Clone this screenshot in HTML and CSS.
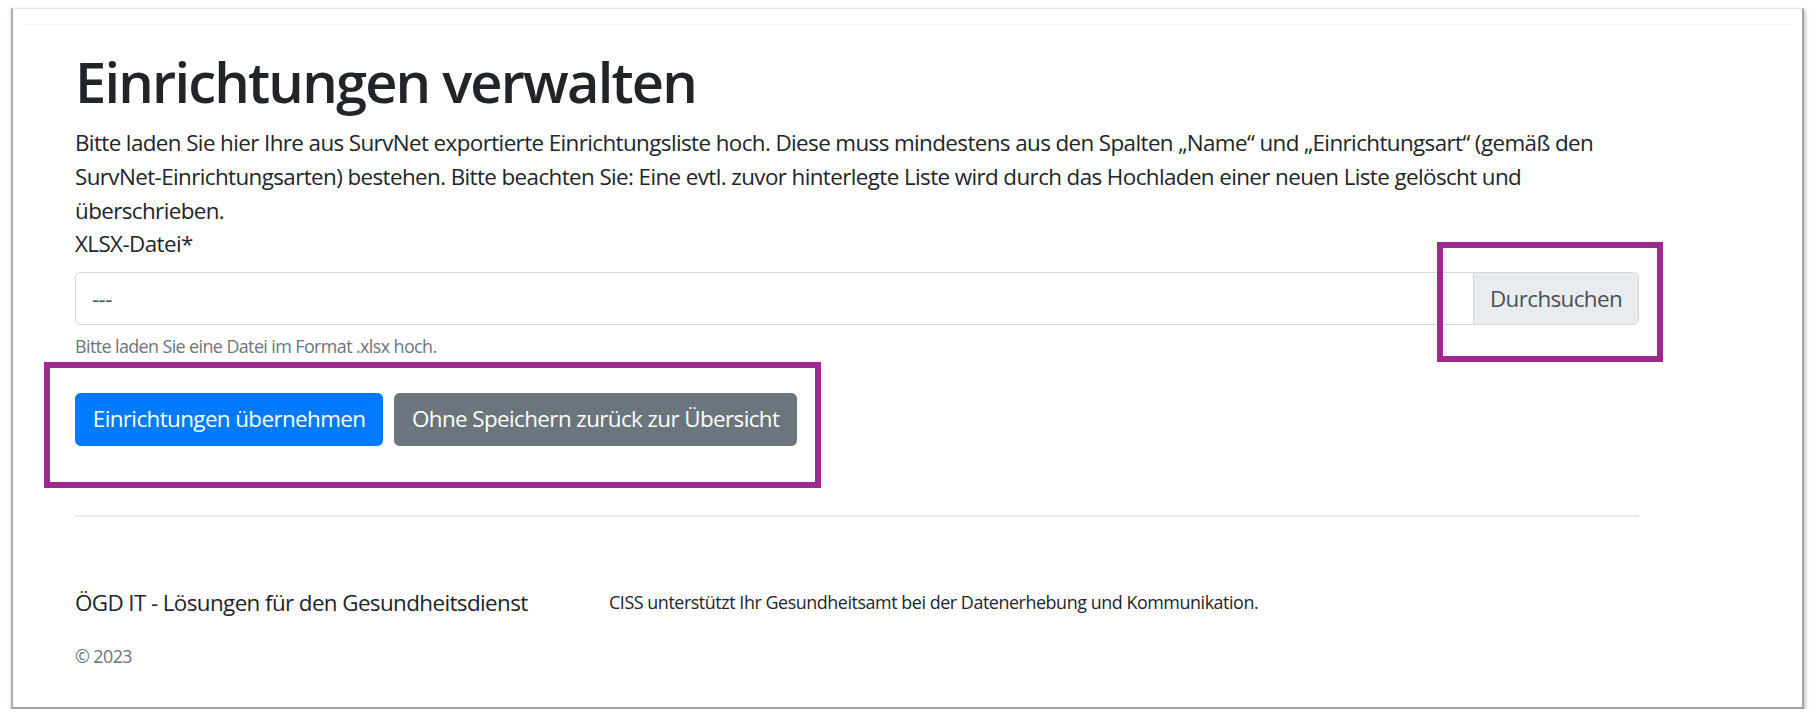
FILE: index.html
```html
<!DOCTYPE html>
<html lang="de">
<head>
<meta charset="utf-8">
<title>Einrichtungen verwalten</title>
<link rel="stylesheet" href="styles.css">
</head>
<body>
<div class="frame">
  <div class="navbar"></div>
  <main class="content">
    <h1 class="title">Einrichtungen verwalten</h1>
    <p class="intro">Bitte laden Sie hier Ihre aus SurvNet exportierte Einrichtungsliste hoch. Diese muss mindestens aus den Spalten „Name“ und „Einrichtungsart“ (gemäß den SurvNet-Einrichtungsarten) bestehen. Bitte beachten Sie: Eine evtl. zuvor hinterlegte Liste wird durch das Hochladen einer neuen Liste gelöscht und überschrieben.</p>
    <div class="form-group">
      <label class="field-label">XLSX-Datei*</label>
      <div class="file-input">
        <span class="file-name">---</span>
        <span class="file-browse">Durchsuchen</span>
        <span class="highlight highlight-browse"></span>
      </div>
      <small class="help">Bitte laden Sie eine Datei im Format .xlsx hoch.</small>
    </div>
    <div class="actions">
      <button class="btn btn-primary">Einrichtungen übernehmen</button>
      <button class="btn btn-secondary">Ohne Speichern zurück zur Übersicht</button>
      <span class="highlight highlight-actions"></span>
    </div>
    <hr class="divider">
    <footer class="footer">
      <div class="footer-row">
        <span class="footer-brand">ÖGD IT - Lösungen für den Gesundheitsdienst</span>
        <span class="footer-tagline">CISS unterstützt Ihr Gesundheitsamt bei der Datenerhebung und Kommunikation.</span>
      </div>
      <div class="copyright">© 2023</div>
    </footer>
  </main>
</div>
</body>
</html>
```
FILE: styles.css
```css
* { box-sizing: border-box; }
html, body { margin: 0; padding: 0; background: #fff; }
body {
  font-family: "Open Sans", "Noto Sans", sans-serif;
  color: #212529;
  font-size: 22.4px;
  line-height: 33.6px;
  letter-spacing: -0.6px;
}
.frame {
  margin: 8px 0 0 11px;
  width: 1793px;
  height: 701px;
  background: #fff;
  border: 1px solid #c9c9c9;
  border-top-color: #e6e6e6;
  border-left: 2px solid #acacac;
  border-right: 2px solid #a5a5a5;
  border-bottom: 2px solid #a0a0a0;
  box-shadow: 1px 2px 4px rgba(0,0,0,.3);
}
.navbar {
  height: 16px;
  margin: 0 12px;
  border-bottom: 1px solid #f3f3f3;
}
.content {
  width: 1626px;
  padding-left: 62px;
}
.title {
  margin: 23px 0 11.2px;
  font-size: 56px;
  line-height: 67.2px;
  font-weight: 600;
  letter-spacing: -1.8px;
}
.intro { margin: 0; }
.field-label {
  display: block;
  margin-bottom: 11.2px;
}
.file-input {
  position: relative;
  display: flex;
  height: 53.2px;
}
.file-name {
  flex: 1;
  display: flex;
  align-items: center;
  padding: 0 16px;
  border: 1px solid #d3d8de;
  border-right: none;
  border-radius: 5.6px 0 0 5.6px;
  color: #495057;
}
.file-browse {
  width: 166px;
  display: flex;
  align-items: center;
  justify-content: center;
  background: #e9ecef;
  border: 1px solid #d3d8de;
  border-radius: 0 5.6px 5.6px 0;
  color: #495057;
}
.help {
  display: block;
  margin-top: 8px;
  font-size: 17.92px;
  line-height: 26.88px;
  color: #6c757d;
}
.actions {
  position: relative;
  display: flex;
  gap: 11px;
  margin-top: 32.5px;
}
.btn {
  font: inherit;
  letter-spacing: inherit;
  padding: 8.8px 16.8px;
  border: 1px solid transparent;
  border-radius: 5.6px;
  color: #fff;
}
.btn-primary { background: #007bff; border-color: #007bff; }
.btn-secondary { background: #6c757d; border-color: #6c757d; }
.highlight {
  position: absolute;
  border: 6px solid #9f2a8f;
  pointer-events: none;
}
.highlight-browse { left: 1362px; top: -30px; width: 226px; height: 120px; }
.highlight-actions { left: -31px; top: -31px; width: 777px; height: 126px; }
.divider {
  margin: 68.8px 0 0;
  border: 0;
  border-top: 2px solid #eaedf0;
}
.footer { margin-top: 69.5px; }
.footer-row {
  display: flex;
  align-items: center;
}
.footer-brand { width: 534px; }
.footer-tagline { font-size: 17.92px; letter-spacing: -0.45px; }
.copyright {
  margin-top: 23px;
  font-size: 17.92px;
  line-height: 26.88px;
  color: #6c757d;
}
```
